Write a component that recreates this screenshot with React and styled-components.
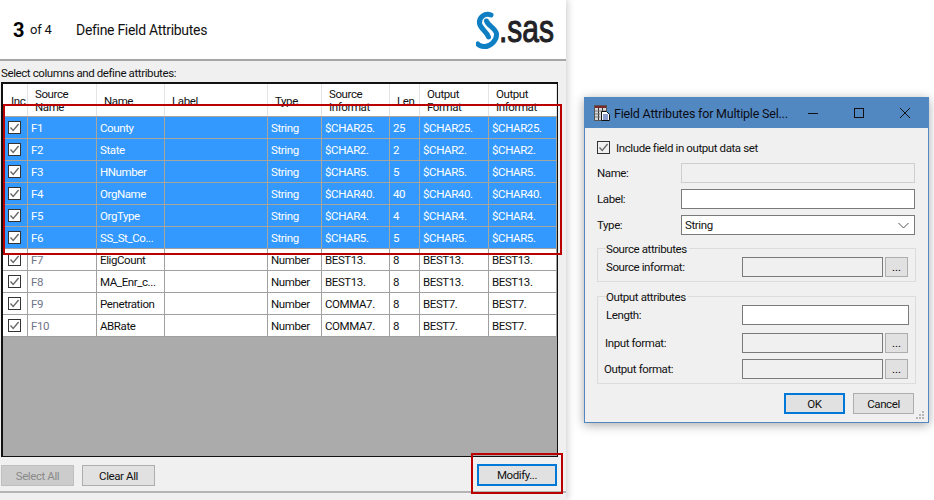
import React from "react";
import styled, { createGlobalStyle } from "styled-components";

const Global = createGlobalStyle`
  html, body { margin: 0; padding: 0; background: #fff; }
  body { font-family: Roboto, "Liberation Sans", sans-serif; font-size: 11.5px; letter-spacing: -0.4px; color: #111; }
  #root { width: 934px; height: 500px; position: relative; overflow: hidden; }
  * { box-sizing: border-box; }
`;

const COLS = "25px 69px 68px 103px 54px 68px 30px 69px 68px";

const Page = styled.div`
  width: 934px;
  height: 500px;
  position: relative;
  background: #fff;
`;
const Wizard = styled.div`
  width: 566px;
  height: 500px;
  background: #f0f0f0;
  display: flex;
  flex-direction: column;
  box-shadow: 2px 0 7px rgba(0, 0, 0, 0.18);
  position: relative;
`;
const Header = styled.header`
  height: 61px;
  background: #fff;
  border-bottom: 2px solid #a6a6a6;
  display: flex;
  align-items: center;
  padding: 0 4px 0 13px;
`;
const StepNum = styled.span`
  font-size: 20px;
  font-weight: 700;
  color: #000;
  letter-spacing: 0;
  width: 17px;
`;
const StepOf = styled.span`
  font-size: 13px;
  letter-spacing: -0.2px;
  width: 46px;
`;
const StepTitle = styled.span`
  font-size: 14px;
  letter-spacing: -0.3px;
  flex: 1;
`;
const Caption = styled.div`
  height: 21px;
  padding: 5px 0 0 1px;
  line-height: 14px;
`;
const GridBox = styled.div`
  margin-left: 1px;
  width: 557px;
  height: 375px;
  border: solid #111;
  border-width: 2px 1px 1px 2px;
  background: #ababab;
  overflow: hidden;
`;
const HeadRow = styled.div`
  display: grid;
  grid-template-columns: ${COLS};
  height: 32px;
  background: #fff;
`;
const HeadCell = styled.div`
  border-right: 1px solid #e4e4e4;
  padding: 2px 0 0 ${(p) => (p.$first ? 8 : 7)}px;
  display: flex;
  align-items: center;
  line-height: 13px;
  white-space: pre-line;
`;
const Row = styled.div`
  display: grid;
  grid-template-columns: ${COLS};
  height: 22px;
  border-top: 1px solid ${(p) => (p.$selected ? "#a8a59c" : "#a0a0a0")};
  background: ${(p) => (p.$selected ? "#3399ff" : "#fff")};
  color: ${(p) => (p.$selected ? "#fff" : "#111")};
`;
const Cell = styled.div`
  border-right: 1px solid ${(p) => (p.$selected ? "#a8a59c" : "#a0a0a0")};
  padding-left: 3px;
  line-height: 23px;
  white-space: nowrap;
  overflow: hidden;
  color: ${(p) => (p.$id && !p.$selected ? "#6f7488" : "inherit")};
`;
const CheckCell = styled(Cell)`
  padding: 4px 0 0 5px;
  line-height: 0;
`;
const CheckBox = styled.span`
  display: inline-flex;
  width: 13px;
  height: 13px;
  border: 1px solid #333;
  background: #fff;
  align-items: center;
  justify-content: center;
  flex-shrink: 0;
`;
const RowEnd = styled.div`
  height: 1px;
  background: #a0a0a0;
`;
const Footer = styled.div`
  height: 36px;
  padding: 8px 9px 0 1px;
  display: flex;
  align-items: flex-start;
  gap: 8px;
  border-bottom: 2px solid #b4b4b4;
`;
const Btn = styled.button`
  font: inherit;
  letter-spacing: inherit;
  width: ${(p) => p.$w || 73}px;
  height: ${(p) => p.$h || 21}px;
  padding: 0;
  background: ${(p) => (p.disabled ? "#cccccc" : "#e1e1e1")};
  color: ${(p) => (p.disabled ? "#8a8a8a" : "#111")};
  border: ${(p) => (p.$primary ? "2px solid #0078d7" : `1px solid ${p.disabled ? "#bfbfbf" : "#adadad"}`)};
`;
const FooterModify = styled(Btn)`
  margin-left: auto;
  margin-top: -1px;
  height: 22px;
`;
const RedBox = styled.div`
  position: absolute;
  left: ${(p) => p.$x}px;
  top: ${(p) => p.$y}px;
  width: ${(p) => p.$w}px;
  height: ${(p) => p.$h}px;
  border: 2px solid #bb0000;
  pointer-events: none;
`;

const Dialog = styled.section`
  position: absolute;
  left: 584px;
  top: 97px;
  width: 345px;
  height: 326px;
  background: #f0f0f0;
  border: 1px solid #5288c2;
  box-shadow: 0 2px 10px rgba(0, 0, 0, 0.35);
  display: flex;
  flex-direction: column;
`;
const TitleBar = styled.div`
  height: 30px;
  background: #5288c2;
  display: flex;
  align-items: center;
  padding-left: 9px;
  flex-shrink: 0;
`;
const TitleText = styled.span`
  font-size: 12.5px;
  letter-spacing: -0.2px;
  color: #0c0c14;
  margin-left: 4px;
  flex: 1;
  white-space: nowrap;
`;
const WinBtn = styled.span`
  width: 46px;
  flex-shrink: 0;
  display: flex;
  justify-content: center;
  align-items: center;
`;
const DialogBody = styled.div`
  padding: 13px 13px 0 12px;
  position: relative;
  flex: 1;
`;
const CheckRow = styled.label`
  display: flex;
  align-items: center;
  gap: 6px;
  height: 13px;
  margin-bottom: 9px;
`;
const DialogCheck = styled(CheckBox)`
  background: #f0f0f0;
`;
const Field = styled.div`
  display: flex;
  align-items: center;
  height: 20px;
  margin-bottom: ${(p) => p.$gap ?? 6}px;
`;
const FieldLabel = styled.span`
  width: ${(p) => p.$w || 84}px;
  margin-left: ${(p) => p.$shift || 0}px;
  flex-shrink: 0;
`;
const Input = styled.div`
  flex: ${(p) => (p.$w ? "none" : 1)};
  width: ${(p) => (p.$w ? `${p.$w}px` : "auto")};
  height: 20px;
  background: ${(p) => (p.$disabled ? "#f0f0f0" : "#fff")};
  border: 1px solid ${(p) => (p.$light ? "#cfcfcf" : "#7a7a7a")};
`;
const Select = styled(Input)`
  display: flex;
  align-items: center;
  justify-content: space-between;
  padding: 0 5px 0 3px;
`;
const Group = styled.div`
  position: relative;
  width: 319px;
  margin-top: ${(p) => p.$top}px;
  border: 1px solid #dcdcdc;
  padding: 8px 6px 4px 8px;
`;
const Legend = styled.span`
  position: absolute;
  left: 8px;
  top: -7px;
  line-height: 14px;
  padding-right: 2px;
  background: #f0f0f0;
`;
const Dots = styled.button`
  width: 23px;
  height: 20px;
  margin-left: 2px;
  padding: 0;
  background: #e1e1e1;
  border: 1px solid #adadad;
  font: inherit;
  letter-spacing: 0;
  line-height: 18px;
`;
const DialogActions = styled.div`
  display: flex;
  justify-content: flex-end;
  gap: 8px;
  padding-right: 1px;
  margin-top: 9px;
`;
const Grip = styled.svg`
  position: absolute;
  right: 3px;
  bottom: 2px;
`;

const rows = [
  ["F1", "County", "String", "$CHAR25.", "25", "$CHAR25.", "$CHAR25.", true],
  ["F2", "State", "String", "$CHAR2.", "2", "$CHAR2.", "$CHAR2.", true],
  ["F3", "HNumber", "String", "$CHAR5.", "5", "$CHAR5.", "$CHAR5.", true],
  ["F4", "OrgName", "String", "$CHAR40.", "40", "$CHAR40.", "$CHAR40.", true],
  ["F5", "OrgType", "String", "$CHAR4.", "4", "$CHAR4.", "$CHAR4.", true],
  ["F6", "SS_St_Co...", "String", "$CHAR5.", "5", "$CHAR5.", "$CHAR5.", true],
  ["F7", "EligCount", "Number", "BEST13.", "8", "BEST13.", "BEST13.", false],
  ["F8", "MA_Enr_c...", "Number", "BEST13.", "8", "BEST13.", "BEST13.", false],
  ["F9", "Penetration", "Number", "COMMA7.", "8", "BEST7.", "BEST7.", false],
  ["F10", "ABRate", "Number", "COMMA7.", "8", "BEST7.", "BEST7.", false],
];
const heads = ["Inc.", "Source\nName", "Name", "Label", "Type", "Source\nInformat", "Len", "Output\nFormat", "Output\nInformat"];

const Tick = () => (
  <svg width="11" height="11" viewBox="0 0 11 11">
    <path d="M1.5 5.5 L4.2 8.5 L9.6 2" fill="none" stroke="#6a6a6a" strokeWidth="1.4" />
  </svg>
);

const SasLogo = () => (
  <svg width="86" height="50" viewBox="0 -6 86 50">
    <path d="M15 4 C9 1.5 2.5 6.5 3.5 12.5 C4.5 18 10.5 20 12.5 26" fill="none" stroke="#0f7fc4" strokeWidth="5" strokeLinecap="round" />
    <path d="M10.5 10 C12 15 20 17 20.5 23 C21 30 13.5 36 8 35.5 C5 35.3 3 34.5 1.8 33" fill="none" stroke="#0f7fc4" strokeWidth="5" strokeLinecap="round" />
    <g transform="translate(23 30.5) scale(1 1.28)">
      <text x="0" y="0" fontFamily="'Liberation Sans', sans-serif" fontSize="30" letterSpacing="0" fill="#222226" stroke="#222226" strokeWidth="0.8">.sas</text>
    </g>
  </svg>
);

const AppIcon = () => (
  <svg width="16" height="16" viewBox="0 0 16 16">
    <rect x="0.5" y="0.5" width="12" height="15" fill="#d8d8d8" stroke="#555" />
    <path d="M1 1h11v2H1z" fill="#7a2a2a" />
    <path d="M4.5 3v12M8.5 3v5" stroke="#333" />
    <path d="M1 6h11M1 9h5M1 12h5" stroke="#777" />
    <path d="M7.5 6.5h5l3 3v6h-8z" fill="#fff" stroke="#111" />
    <path d="M9 10h5M9 12h5M9 14h5" stroke="#1a3fa0" strokeWidth="1.2" />
  </svg>
);

export default function App() {
  return (
    <Page>
      <Global />
      <Wizard>
        <Header>
          <StepNum>3</StepNum>
          <StepOf>of 4</StepOf>
          <StepTitle>Define Field Attributes</StepTitle>
          <SasLogo />
        </Header>
        <Caption>Select columns and define attributes:</Caption>
        <GridBox>
          <HeadRow>
            {heads.map((h, i) => (
              <HeadCell key={h} $first={i === 0}>{h}</HeadCell>
            ))}
          </HeadRow>
          {rows.map((r) => (
            <Row key={r[0]} $selected={r[7]}>
              <CheckCell $selected={r[7]}>
                <CheckBox><Tick /></CheckBox>
              </CheckCell>
              <Cell $id $selected={r[7]}>{r[0]}</Cell>
              <Cell $selected={r[7]}>{r[1]}</Cell>
              <Cell $selected={r[7]} />
              <Cell $selected={r[7]}>{r[2]}</Cell>
              <Cell $selected={r[7]}>{r[3]}</Cell>
              <Cell $selected={r[7]}>{r[4]}</Cell>
              <Cell $selected={r[7]}>{r[5]}</Cell>
              <Cell $selected={r[7]}>{r[6]}</Cell>
            </Row>
          ))}
          <RowEnd />
        </GridBox>
        <Footer>
          <Btn disabled>Select All</Btn>
          <Btn>Clear All</Btn>
          <FooterModify $primary $w={80}>Modify...</FooterModify>
        </Footer>
        <RedBox $x={3} $y={104} $w={559} $h={151} />
        <RedBox $x={471} $y={453} $w={92} $h={41} />
      </Wizard>
      <Dialog>
        <TitleBar>
          <AppIcon />
          <TitleText>Field Attributes for Multiple Sel...</TitleText>
          <WinBtn>
            <svg width="10" height="10" viewBox="0 0 10 10"><path d="M0 5.5h10" stroke="#111" /></svg>
          </WinBtn>
          <WinBtn>
            <svg width="10" height="10" viewBox="0 0 10 10"><rect x="0.5" y="0.5" width="9" height="9" fill="none" stroke="#111" /></svg>
          </WinBtn>
          <WinBtn>
            <svg width="10" height="10" viewBox="0 0 10 10"><path d="M0 0l10 10M10 0L0 10" stroke="#111" /></svg>
          </WinBtn>
        </TitleBar>
        <DialogBody>
          <CheckRow>
            <DialogCheck><Tick /></DialogCheck>
            Include field in output data set
          </CheckRow>
          <Field>
            <FieldLabel>Name:</FieldLabel>
            <Input $disabled $light />
          </Field>
          <Field>
            <FieldLabel>Label:</FieldLabel>
            <Input />
          </Field>
          <Field $gap={0}>
            <FieldLabel>Type:</FieldLabel>
            <Select>
              String
              <svg width="11" height="7" viewBox="0 0 11 7"><path d="M0.5 1l5 5 5-5" fill="none" stroke="#555" /></svg>
            </Select>
          </Field>
          <Group $top={13}>
            <Legend>Source attributes</Legend>
            <Field $gap={0}>
              <FieldLabel $w={136}>Source informat:</FieldLabel>
              <Input $disabled $w={141} />
              <Dots>...</Dots>
            </Field>
          </Group>
          <Group $top={14}>
            <Legend>Output attributes</Legend>
            <Field $gap={8}>
              <FieldLabel $w={136}>Length:</FieldLabel>
              <Input />
            </Field>
            <Field>
              <FieldLabel $w={137} $shift={-1}>Input format:</FieldLabel>
              <Input $disabled $w={141} />
              <Dots>...</Dots>
            </Field>
            <Field $gap={0}>
              <FieldLabel $w={138} $shift={-2}>Output format:</FieldLabel>
              <Input $disabled $w={141} />
              <Dots>...</Dots>
            </Field>
          </Group>
          <DialogActions>
            <Btn $primary $w={61}>OK</Btn>
            <Btn $w={61}>Cancel</Btn>
          </DialogActions>
          <Grip width="9" height="9" viewBox="0 0 9 9">
            <path d="M6 0h2v2H6zM3 3h2v2H3zM6 3h2v2H6zM0 6h2v2H0zM3 6h2v2H3zM6 6h2v2H6z" fill="#b8b8b8" />
          </Grip>
        </DialogBody>
      </Dialog>
    </Page>
  );
}
